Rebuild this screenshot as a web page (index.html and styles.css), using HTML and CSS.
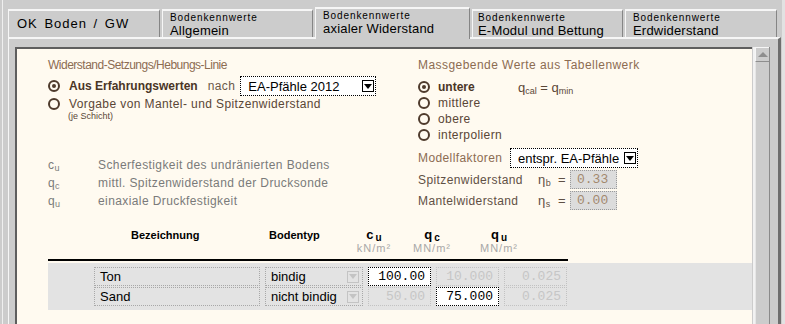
FILE: index.html
```html
<!DOCTYPE html>
<html lang="de">
<head>
  <meta charset="UTF-8">
  <title>Bodenkennwerte axialer Widerstand</title>
  <link rel="stylesheet" href="styles.css">
</head>
<body>
  <div class="app">
    <div class="frame">
      <div class="tabs">
        <div class="tab tab-1"><span class="tab-big">OK Boden / GW</span></div>
        <div class="tab tab-2"><span class="tab-small">Bodenkennwerte</span><span class="tab-big">Allgemein</span></div>
        <div class="tab tab-3 active"><span class="tab-small">Bodenkennwerte</span><span class="tab-big">axialer Widerstand</span></div>
        <div class="tab tab-4"><span class="tab-small">Bodenkennwerte</span><span class="tab-big">E-Modul und Bettung</span></div>
        <div class="tab tab-5"><span class="tab-small">Bodenkennwerte</span><span class="tab-big">Erdwiderstand</span></div>
      </div>

      <div class="panel">
        <div class="sheet">
          <div class="content">
            <div class="top">
              <!-- linke Spalte -->
              <div class="col col-left">
                <div class="group-title title-left">Widerstand-Setzungs/Hebungs-Linie</div>
                <div class="choice choice-main">
                  <span class="radio on"></span>
                  <span class="choice-label strong">Aus Erfahrungswerten</span>
                  <span class="nach">nach</span>
                  <div class="select select-wide"><span>EA-Pfähle 2012</span><span class="select-arrow"></span></div>
                </div>
                <div class="choice">
                  <span class="radio"></span>
                  <span class="choice-label">Vorgabe von Mantel- und Spitzenwiderstand</span>
                </div>
                <div class="hint">(je Schicht)</div>
                <div class="symbols">
                  <span class="sym">c<sub>u</sub></span><span>Scherfestigkeit des undränierten Bodens</span>
                  <span class="sym">q<sub>c</sub></span><span>mittl. Spitzenwiderstand der Drucksonde</span>
                  <span class="sym">q<sub>u</sub></span><span>einaxiale Druckfestigkeit</span>
                </div>
              </div>

              <!-- rechte Spalte -->
              <div class="col col-right">
                <div class="group-title title-right">Massgebende Werte aus Tabellenwerk</div>
                <div class="levels">
                  <div class="level"><span class="radio on"></span><span class="choice-label strong">untere</span><span class="formula">q<sub>cal</sub> = q<sub>min</sub></span></div>
                  <div class="level"><span class="radio"></span><span class="choice-label">mittlere</span></div>
                  <div class="level"><span class="radio"></span><span class="choice-label">obere</span></div>
                  <div class="level"><span class="radio"></span><span class="choice-label">interpoliern</span></div>
                </div>
                <div class="factor-head">
                  <span class="factor-title">Modellfaktoren</span>
                  <div class="select select-narrow"><span>entspr. EA-Pfähle</span><span class="select-arrow"></span></div>
                </div>
                <div class="factor">
                  <span class="factor-label">Spitzenwiderstand</span>
                  <span class="factor-sym">η<sub>b</sub></span>
                  <span class="factor-eq">=</span>
                  <span class="factor-box">0.33</span>
                </div>
                <div class="factor">
                  <span class="factor-label">Mantelwiderstand</span>
                  <span class="factor-sym">η<sub>s</sub></span>
                  <span class="factor-eq">=</span>
                  <span class="factor-box">0.00</span>
                </div>
              </div>
            </div>

            <!-- Schichttabelle -->
            <div class="soil-head">
              <div class="th th-name">Bezeichnung</div>
              <div class="th th-type">Bodentyp</div>
              <div class="th th-val th-cu">c<sub>u</sub><span class="unit">kN/m²</span></div>
              <div class="th th-val th-qc">q<sub>c</sub><span class="unit">MN/m²</span></div>
              <div class="th th-val th-qu">q<sub>u</sub><span class="unit">MN/m²</span></div>
            </div>
            <div class="soil-rows">
              <div class="soil-row">
                <div class="cell name">Ton</div>
                <div class="cell type">bindig<span class="mini-arrow"></span></div>
                <div class="cell num edit">100.00</div>
                <div class="cell num off">10.000</div>
                <div class="cell num off">0.025</div>
              </div>
              <div class="soil-row">
                <div class="cell name">Sand</div>
                <div class="cell type">nicht bindig<span class="mini-arrow"></span></div>
                <div class="cell num off">50.00</div>
                <div class="cell num edit">75.000</div>
                <div class="cell num off">0.025</div>
              </div>
            </div>
          </div>

          <div class="scrollbar">
            <div class="scroll-btn"></div>
          </div>
        </div>
      </div>
    </div>
  </div>
</body>
</html>
```

FILE: styles.css
```css
html, body {
  margin: 0;
  padding: 0;
}

body {
  background: #cccccc;
  font-family: "Liberation Sans", Arial, sans-serif;
  font-size: 12px;
  letter-spacing: 0.4px;
  color: #54402f;
}

.app {
  width: 785px;
  height: 324px;
  box-sizing: border-box;
  overflow: hidden;
  padding-left: 2px;
  border-right: 3px solid #e2e2e2;
}

.frame {
  border-left: 1px solid #efefef;
  padding-left: 5px;
  height: 100%;
}

/* Reiter */
.tabs {
  display: flex;
  align-items: flex-end;
  gap: 2px;
  height: 37px;
}

.tab {
  height: 28px;
  box-sizing: border-box;
  background: #cccccc;
  border-top: 2px solid #f6f6f6;
  border-left: 1px solid #f6f6f6;
  border-right: 1px solid #858585;
  padding: 1px 0 0 7px;
  display: flex;
  flex-direction: column;
  color: #000;
}

.tab-1 { width: 152px; justify-content: center; padding: 0 0 1px 8px; }
.tab-1 .tab-big { letter-spacing: 1px; word-spacing: 2px; }
.tab-2 { width: 151px; }
.tab-3 { width: 155px; }
.tab-4 { width: 151px; padding-left: 5px; }
.tab-5 { width: 152px; }

.tab.active {
  height: 32px;
  margin-bottom: -2px;
  padding-top: 1px;
  position: relative;
  z-index: 1;
}

.tab-small {
  font-size: 10px;
  line-height: 12px;
  letter-spacing: 0.9px;
}

.tab-big {
  font-size: 13px;
  line-height: 13px;
  letter-spacing: 0.2px;
}

/* Karteikarte */
.panel {
  width: 773px;
  height: 287px;
  box-sizing: border-box;
  border-top: 2px solid #f6f6f6;
  border-left: 1px solid #f6f6f6;
  border-right: 3px solid #6e6e6e;
  padding: 8px 8px 0 6px;
}

.sheet {
  display: flex;
  height: 100%;
}

.content {
  width: 737px;
  flex: none;
  box-sizing: border-box;
  border-top: 2px solid #5e5e5e;
  border-left: 2px solid #5e5e5e;
  background: #fffaf0;
  padding: 8px 0 0 31px;
}

.scrollbar {
  margin-left: 1px;
  width: 14px;
  border-left: 2px solid #f2f2f2;
  border-right: 1px solid #8a8a8a;
  box-shadow: inset 1px 0 #e6e6e6;
}

.scroll-btn {
  height: 15px;
  box-sizing: border-box;
  border-top: 1px solid #f6f6f6;
  border-left: 1px solid #f6f6f6;
  border-bottom: 1px solid #8e8e8e;
  display: flex;
  align-items: center;
  justify-content: center;
}

.scroll-btn::after {
  content: "";
  border-left: 5px solid transparent;
  border-right: 5px solid transparent;
  border-bottom: 5px solid #8e8e8e;
}

/* obere Bereiche */
.top {
  display: grid;
  grid-template-columns: 370px 1fr;
}

.group-title {
  line-height: 16px;
  color: #8c6c52;
}

.title-left { letter-spacing: -0.5px; }
.title-right { letter-spacing: 0.45px; }

.radio {
  width: 12px;
  height: 12px;
  flex: none;
  box-sizing: border-box;
  border: 2px solid #4e3a2c;
  border-radius: 50%;
  display: flex;
  align-items: center;
  justify-content: center;
}

.radio.on::after {
  content: "";
  width: 4px;
  height: 4px;
  border-radius: 50%;
  background: #4e3a2c;
}

.choice {
  display: flex;
  align-items: center;
  height: 16px;
}

.choice-main {
  height: 20px;
  margin-top: 3px;
}

.choice-label {
  margin-left: 9px;
  color: #5a4636;
}

.strong {
  font-weight: bold;
  letter-spacing: 0;
  color: #4a3526;
}

.nach {
  margin-left: 10px;
  color: #6b5849;
}

.select {
  display: flex;
  align-items: center;
  justify-content: space-between;
  height: 20px;
  box-sizing: border-box;
  border: 1px dotted #000;
  background: #fff;
  color: #000;
  font-size: 13px;
  letter-spacing: 0;
  padding: 0 1px 0 7px;
}

.select-wide {
  width: 136px;
  margin-left: 5px;
}

.select-narrow {
  width: 128px;
  padding-left: 7px;
}

.select-arrow {
  width: 12px;
  height: 12px;
  box-sizing: border-box;
  border: 1px solid #000;
  display: flex;
  align-items: center;
  justify-content: center;
}

.select-arrow::after {
  content: "";
  border-left: 4px solid transparent;
  border-right: 4px solid transparent;
  border-top: 5px solid #000;
}

.hint {
  font-size: 9px;
  line-height: 9px;
  letter-spacing: 0;
  padding-left: 20px;
  color: #5a4636;
}

.symbols {
  margin-top: 35px;
  display: grid;
  grid-template-columns: 50px 1fr;
  line-height: 18px;
  color: #7a7a7a;
}

sub {
  font-size: 9px;
  vertical-align: -2px;
  line-height: 0;
}

.levels {
  margin-top: 6px;
}

.level {
  display: flex;
  align-items: center;
  height: 16px;
}

.level .choice-label {
  margin-left: 8px;
  width: 80px;
}

.formula {
  font-size: 13px;
  letter-spacing: 0;
  color: #5a4636;
}

.factor-head {
  display: flex;
  align-items: center;
  height: 20px;
  margin-top: 5px;
}

.factor-title {
  width: 92px;
  color: #8c6c52;
}

.factor {
  display: flex;
  align-items: center;
  height: 19px;
  margin-top: 2px;
  color: #5f5045;
}

.factor-label {
  width: 120px;
}

.factor-sym {
  width: 20px;
  font-size: 13px;
}

.factor-eq {
  width: 12px;
  font-size: 13px;
}

.factor-box {
  width: 47px;
  height: 19px;
  box-sizing: border-box;
  border: 1px dotted #9a9a9a;
  background: #dcdcdc;
  color: #a3896f;
  font-family: "Liberation Mono", monospace;
  font-size: 13px;
  line-height: 17px;
  letter-spacing: 0;
  padding-left: 6px;
}

/* Tabelle */
.soil-head {
  display: flex;
  width: 520px;
  margin-top: 18px;
  padding-bottom: 5px;
  border-bottom: 2px solid #000;
}

.th {
  box-sizing: border-box;
  font-weight: bold;
  font-size: 11px;
  letter-spacing: 0;
  color: #000;
  line-height: 14px;
  height: 26px;
}

.th-name { width: 221px; padding-left: 83px; }
.th-type { width: 76px; }
.th-val { width: 58px; text-align: center; font-size: 13px; }
.th-qu { width: 76px; }

.th sub {
  font-size: 10px;
  margin-left: 2px;
}

.unit {
  display: block;
  font-weight: normal;
  font-size: 11px;
  line-height: 12px;
  letter-spacing: 1px;
  color: #a8a8a8;
}

.soil-rows {
  margin-top: 2px;
  background: #e3e3e3;
  padding: 4px 0 4px 46px;
  display: grid;
  row-gap: 1px;
}

.soil-row {
  display: grid;
  grid-template-columns: 166px 98px 63px 63px 63px;
  column-gap: 5px;
}

.cell {
  height: 19px;
  box-sizing: border-box;
  border: 1px dotted #a8a8a8;
  font-size: 13px;
  line-height: 17px;
  letter-spacing: 0;
  color: #000;
  padding-left: 5px;
}

.cell.type {
  display: flex;
  align-items: center;
  justify-content: space-between;
  padding-right: 3px;
}

.mini-arrow {
  width: 12px;
  height: 12px;
  box-sizing: border-box;
  border: 1px solid #c4c4c4;
  display: flex;
  align-items: center;
  justify-content: center;
}

.mini-arrow::after {
  content: "";
  border-left: 4px solid transparent;
  border-right: 4px solid transparent;
  border-top: 5px solid #c4c4c4;
}

.cell.num {
  font-family: "Liberation Mono", monospace;
  text-align: right;
  padding: 0 5px 0 0;
}

.cell.edit {
  background: #fff;
  border-color: #000;
}

.cell.off {
  color: #c6c6c6;
  border-color: #c2c2c2;
}
```
